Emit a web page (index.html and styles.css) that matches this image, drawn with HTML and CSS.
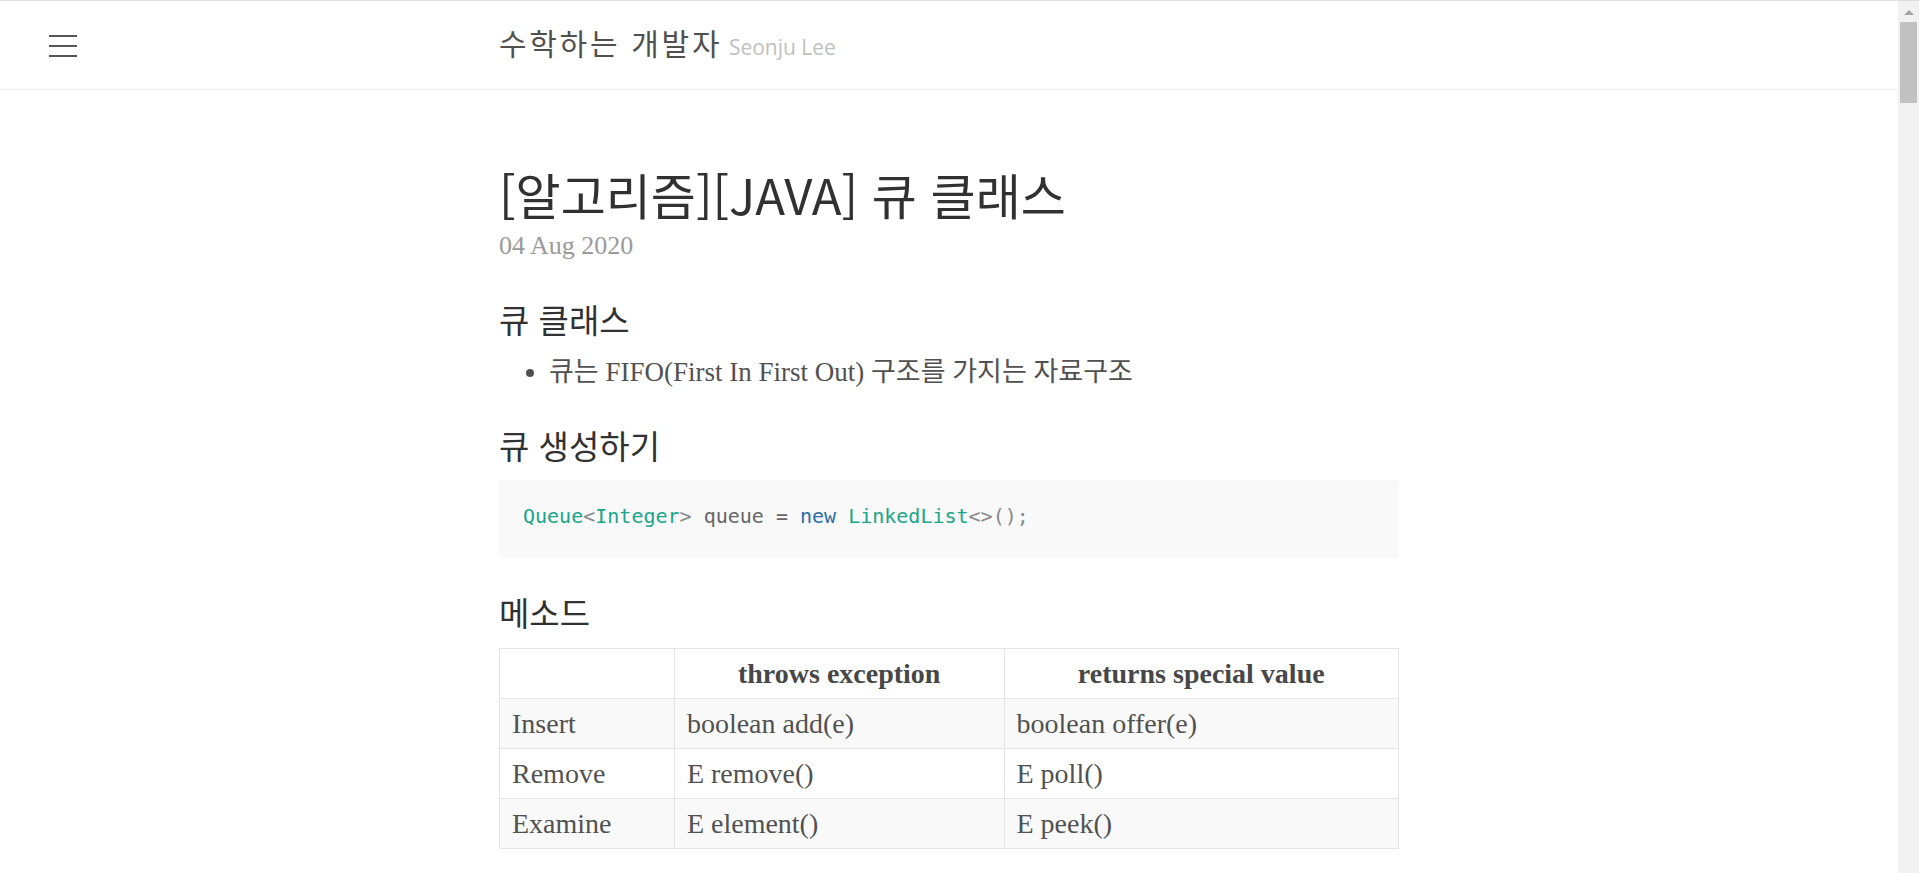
FILE: index.html
```html
<!DOCTYPE html>
<html lang="ko">
<head>
<meta charset="utf-8">
<title>[알고리즘][JAVA] 큐 클래스 · 수학하는 개발자</title>
<link rel="stylesheet" href="styles.css">
</head>
<body>
<div class="page">
  <header class="masthead">
    <div class="toggle-cell">
      <a class="sidebar-toggle" href="#" aria-label="menu">
        <svg width="28" height="22" viewBox="0 0 28 22" aria-hidden="true">
          <rect x="0" y="0" width="28" height="2" fill="#555"/>
          <rect x="0" y="10" width="28" height="2" fill="#555"/>
          <rect x="0" y="20" width="28" height="2" fill="#555"/>
        </svg>
      </a>
    </div>
    <h3 class="masthead-title">
      <a href="#">수학하는 개발자</a>
      <small>Seonju Lee</small>
    </h3>
    <div></div>
  </header>

  <main class="container">
    <article class="post">
      <h1 class="post-title">[알고리즘][JAVA] 큐 클래스</h1>
      <span class="post-date">04 Aug 2020</span>

      <h2 class="sec sec-first">큐 클래스</h2>
      <ul class="list">
        <li>큐는 FIFO(First In First Out) 구조를 가지는 자료구조</li>
      </ul>

      <h2 class="sec">큐 생성하기</h2>
      <pre class="code"><code><span class="t">Queue</span><span class="p">&lt;</span><span class="t">Integer</span><span class="p">&gt;</span> queue = <span class="k">new</span> <span class="t">LinkedList</span><span class="p">&lt;&gt;();</span></code></pre>

      <h2 class="sec sec-method">메소드</h2>
      <table class="methods">
        <colgroup>
          <col class="c1">
          <col class="c2">
          <col class="c3">
        </colgroup>
        <thead>
          <tr><th></th><th>throws exception</th><th>returns special value</th></tr>
        </thead>
        <tbody>
          <tr><td>Insert</td><td>boolean add(e)</td><td>boolean offer(e)</td></tr>
          <tr><td>Remove</td><td>E remove()</td><td>E poll()</td></tr>
          <tr><td>Examine</td><td>E element()</td><td>E peek()</td></tr>
        </tbody>
      </table>
    </article>
  </main>
</div>

<div class="scrollbar" aria-hidden="true">
  <div class="sb-arrow"></div>
  <div class="sb-thumb"></div>
</div>
</body>
</html>
```

FILE: styles.css
```css
html {
  overflow: hidden;
}

body {
  margin: 0;
  border-top: 1px solid #dadce0;
  background: #fff;
  color: #515151;
  font-family: "Liberation Serif", "Noto Sans CJK KR", serif;
}

.page {
  margin-right: 21px;
}

/* header */
.masthead {
  display: grid;
  grid-template-columns: 1fr 900px 1fr;
  align-items: center;
  height: 88px;
  border-bottom: 1px solid #eee;
}

.toggle-cell {
  padding-left: 49px;
  display: flex;
  align-items: center;
}

.sidebar-toggle {
  display: block;
  width: 28px;
  height: 22px;
  margin-top: 1px;
}

.sidebar-toggle svg {
  display: block;
}

.masthead-title {
  margin: 0;
  font-weight: 400;
  line-height: 40px;
  white-space: nowrap;
}

.masthead-title a {
  color: #505050;
  text-decoration: none;
  font-family: "Noto Sans CJK KR", sans-serif;
  font-size: 30px;
  letter-spacing: 2.7px;
}

.masthead-title small {
  font-family: "Open Sans", sans-serif;
  font-size: 21px;
  color: #c0c0c0;
  margin-left: 2px;
}

/* content */
.container {
  width: 900px;
  margin: 0 auto;
  padding-top: 74px;
}

.post-title {
  margin: 0;
  font-family: "Noto Sans CJK KR", sans-serif;
  font-weight: 400;
  font-size: 49px;
  line-height: 60px;
  color: #313131;
}

.post-date {
  display: block;
  margin-top: 7px;
  font-size: 26px;
  line-height: 30px;
  color: #9a9a9a;
}

.sec {
  margin: 35px 0 0;
  padding-bottom: 4px;
  font-family: "Noto Sans CJK KR", sans-serif;
  font-weight: 400;
  font-size: 33px;
  line-height: 36px;
  color: #313131;
}

.sec-first {
  margin-top: 40px;
}

.sec-method {
  margin-top: 36px;
}

.list {
  margin: 11px 0 0;
  padding-left: 50px;
  font-size: 27px;
  line-height: 40px;
}

.code {
  margin: 13px 0 0;
  padding: 22px 24px 26px;
  background: #f9f9f9;
  border-radius: 4px;
  font-family: "Liberation Mono", monospace;
  font-size: 20px;
  line-height: 29px;
  color: #666;
}

.code .t {
  color: #1aa58a;
}

.code .k {
  color: #2b6ea3;
}

.code .p {
  color: #888;
}

/* table */
.methods {
  margin-top: 14px;
  width: 100%;
  border-collapse: collapse;
  border: 1px solid #e5e5e5;
  font-size: 28px;
}

.methods .c1 { width: 175px; }
.methods .c2 { width: 330px; }
.methods .c3 { width: 395px; }

.methods th,
.methods td {
  border: 1px solid #e5e5e5;
  padding: 5px 12px;
  line-height: 39px;
  text-align: left;
}

.methods th {
  text-align: center;
  font-weight: 700;
  color: #474747;
}

.methods tbody tr:nth-child(odd) td {
  background: #f9f9f9;
}

/* fake window scrollbar */
.scrollbar {
  position: fixed;
  top: 1px;
  right: 0;
  bottom: 0;
  width: 21px;
  background: #f1f1f1;
}

.sb-arrow {
  margin: 9px auto 0;
  width: 0;
  height: 0;
  border-left: 5px solid transparent;
  border-right: 5px solid transparent;
  border-bottom: 5px solid #a3a3a3;
}

.sb-thumb {
  margin: 7px 2px 0;
  height: 81px;
  background: #c1c1c1;
}
```
